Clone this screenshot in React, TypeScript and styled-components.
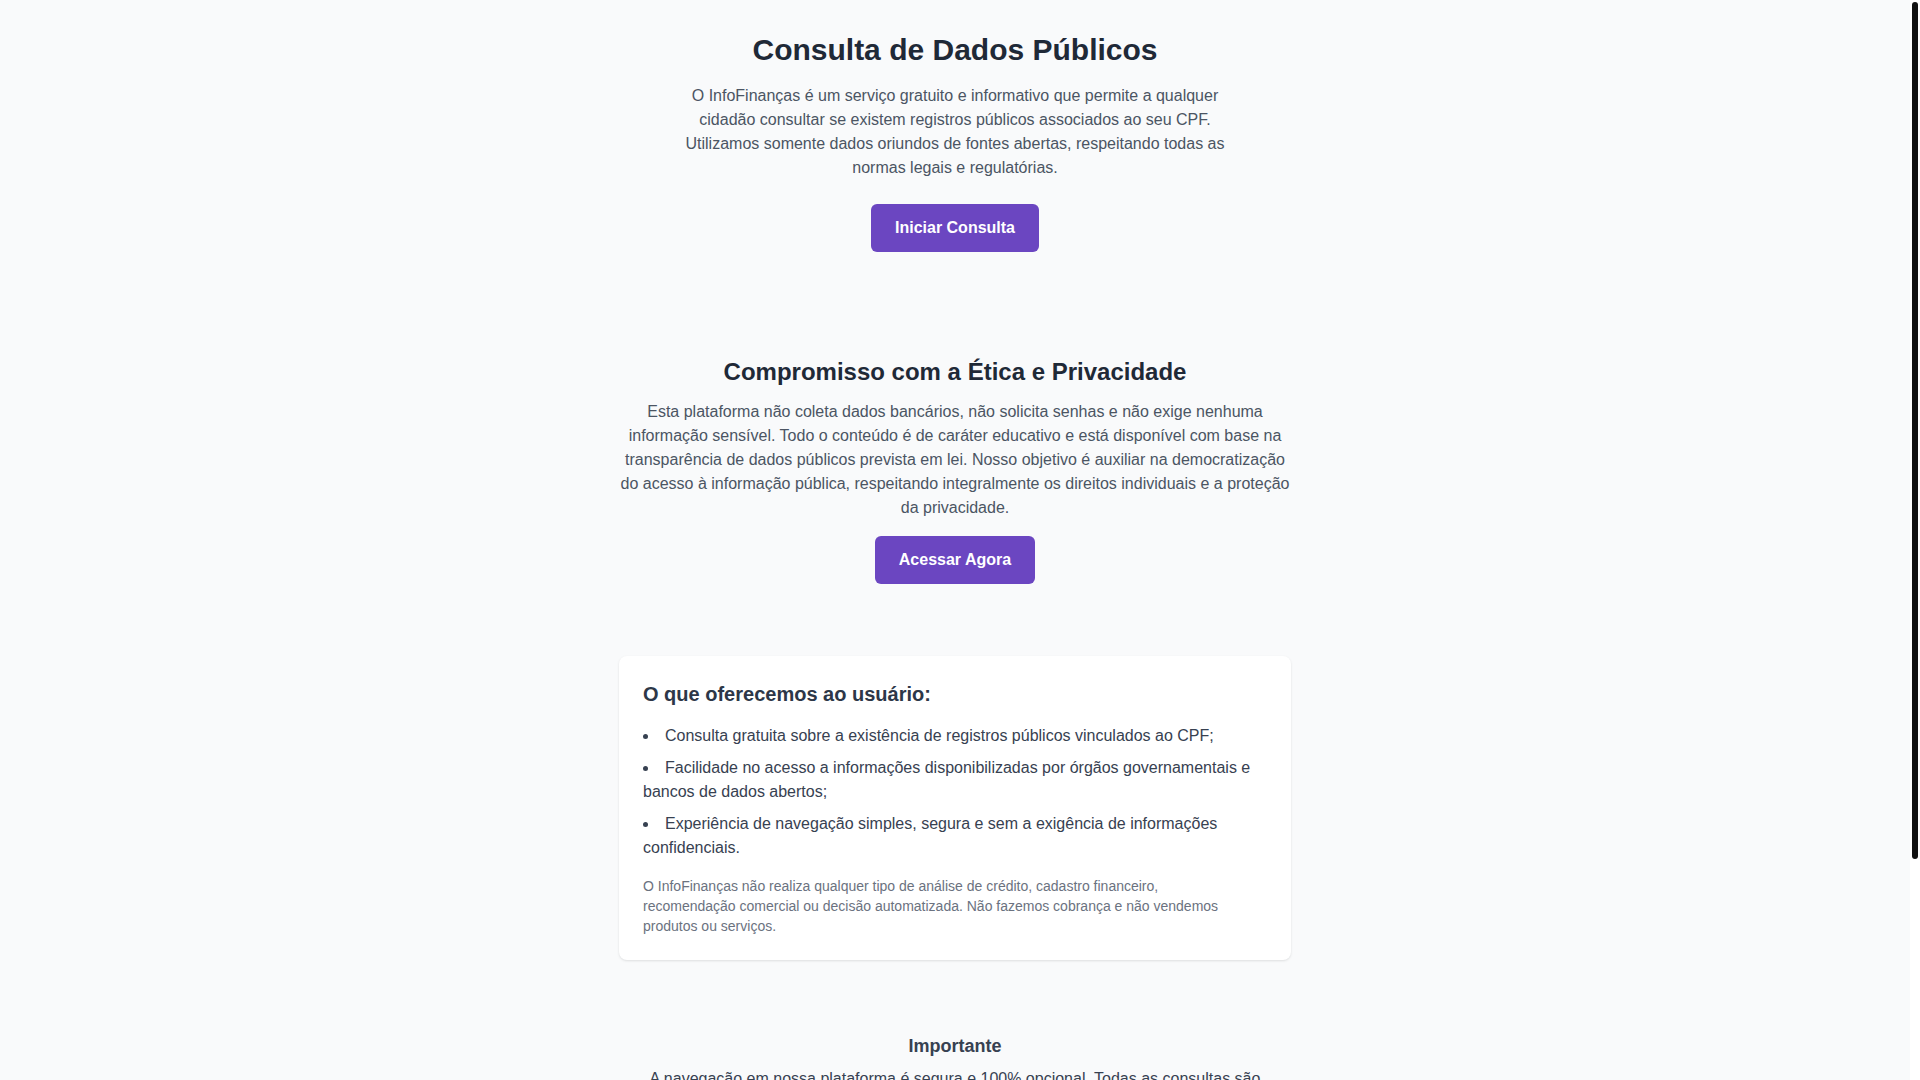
import React from "react";
import styled, { createGlobalStyle } from "styled-components";

const GlobalStyle = createGlobalStyle`
  html, body {
    margin: 0;
    padding: 0;
    height: 100%;
    overflow: hidden;
  }
  body {
    background: #f9fafb;
    font-family: "Liberation Sans", Arial, Helvetica, sans-serif;
    color: #374151;
    -webkit-font-smoothing: antialiased;
  }
  #root { height: 100%; }
  * { box-sizing: border-box; }
`;

const Shell = styled.div`
  display: flex;
  height: 100vh;
  background: #f9fafb;
`;

const Scroller = styled.div`
  flex: 1;
  min-width: 0;
  overflow-y: auto;
  scrollbar-width: none;
  &::-webkit-scrollbar { display: none; }
`;

const Rail = styled.div`
  flex: 0 0 10px;
  background: #ffffff;
  padding: 2px;
`;

const Thumb = styled.div`
  height: 857px;
  background: #111111;
  border-radius: 3px;
`;

const Page = styled.main`
  display: flex;
  flex-direction: column;
  align-items: center;
  padding: 32px 16px 0;
`;

const Section = styled.section<{ $top: number; $width: number }>`
  display: flex;
  flex-direction: column;
  align-items: center;
  text-align: center;
  width: 100%;
  max-width: ${(p) => p.$width}px;
  margin-top: ${(p) => p.$top}px;
`;

const HeroTitle = styled.h1`
  margin: 0 0 16px;
  font-size: 30px;
  line-height: 36px;
  font-weight: 700;
  color: #1f2937;
`;

const SectionTitle = styled.h2`
  margin: 0 0 12px;
  font-size: 24px;
  line-height: 32px;
  font-weight: 700;
  color: #1f2937;
`;

const SmallTitle = styled.h3`
  margin: 0 0 7px;
  font-size: 18px;
  line-height: 28px;
  font-weight: 700;
  color: #374151;
`;

const Lead = styled.p<{ $gap: number; $color?: string }>`
  margin: 0 0 ${(p) => p.$gap}px;
  font-size: 16px;
  line-height: 24px;
  color: ${(p) => p.$color || "#4b5563"};
`;

const CtaButton = styled.button`
  display: inline-flex;
  align-items: center;
  justify-content: center;
  padding: 12px 24px;
  border: none;
  border-radius: 6px;
  background: #6b46c1;
  color: #ffffff;
  font-family: inherit;
  font-size: 16px;
  line-height: 24px;
  font-weight: 700;
  cursor: pointer;
`;

const Card = styled.article`
  width: 100%;
  max-width: 672px;
  margin-top: 72px;
  padding: 24px;
  background: #ffffff;
  border-radius: 8px;
  box-shadow: 0 1px 3px rgba(0, 0, 0, 0.08), 0 1px 2px rgba(0, 0, 0, 0.04);
  text-align: left;
`;

const CardTitle = styled.h3`
  margin: 0 0 16px;
  font-size: 20px;
  line-height: 28px;
  font-weight: 700;
  color: #2d3748;
`;

const FeatureList = styled.ul`
  margin: 0;
  padding: 0;
  list-style: disc inside;
  display: flex;
  flex-direction: column;
  gap: 8px;
`;

const FeatureItem = styled.li`
  font-size: 16px;
  line-height: 24px;
  color: #374151;
`;

const Note = styled.p`
  margin: 16px 0 0;
  max-width: 600px;
  font-size: 14px;
  line-height: 20px;
  color: #6b7280;
`;

const Footer = styled.footer`
  width: 100%;
  max-width: 672px;
  margin-top: 72px;
  padding: 59px 0;
  border-top: 1px solid #e5e7eb;
  display: flex;
  flex-direction: column;
  align-items: center;
  gap: 8px;
  text-align: center;
`;

const FooterText = styled.span`
  font-size: 14px;
  line-height: 20px;
  color: #6b7280;
`;

const features = [
  "Consulta gratuita sobre a existência de registros públicos vinculados ao CPF;",
  "Facilidade no acesso a informações disponibilizadas por órgãos governamentais e bancos de dados abertos;",
  "Experiência de navegação simples, segura e sem a exigência de informações confidenciais.",
];

export default function App() {
  return (
    <>
      <GlobalStyle />
      <Shell>
        <Scroller>
          <Page>
            <Section $top={0} $width={576}>
              <HeroTitle>Consulta de Dados Públicos</HeroTitle>
              <Lead $gap={24}>
                O InfoFinanças é um serviço gratuito e informativo que permite a qualquer cidadão
                consultar se existem registros públicos associados ao seu CPF. Utilizamos somente
                dados oriundos de fontes abertas, respeitando todas as normas legais e regulatórias.
              </Lead>
              <CtaButton type="button">Iniciar Consulta</CtaButton>
            </Section>

            <Section $top={104} $width={672}>
              <SectionTitle>Compromisso com a Ética e Privacidade</SectionTitle>
              <Lead $gap={16}>
                Esta plataforma não coleta dados bancários, não solicita senhas e não exige nenhuma
                informação sensível. Todo o conteúdo é de caráter educativo e está disponível com
                base na transparência de dados públicos prevista em lei. Nosso objetivo é auxiliar
                na democratização do acesso à informação pública, respeitando integralmente os
                direitos individuais e a proteção da privacidade.
              </Lead>
              <CtaButton type="button">Acessar Agora</CtaButton>
            </Section>

            <Card>
              <CardTitle>O que oferecemos ao usuário:</CardTitle>
              <FeatureList>
                {features.map((f) => (
                  <FeatureItem key={f}>{f}</FeatureItem>
                ))}
              </FeatureList>
              <Note>
                O InfoFinanças não realiza qualquer tipo de análise de crédito, cadastro financeiro,
                recomendação comercial ou decisão automatizada. Não fazemos cobrança e não vendemos
                produtos ou serviços.
              </Note>
            </Card>

            <Section $top={72} $width={672}>
              <SmallTitle>Importante</SmallTitle>
              <Lead $gap={0} $color="#374151">
                A navegação em nossa plataforma é segura e 100% opcional. Todas as consultas são
                realizadas a partir de bases públicas e você pode encerrar a navegação a qualquer
                momento.
              </Lead>
            </Section>

            <Footer>
              <FooterText>© 2024 InfoFinanças. Todos os direitos reservados.</FooterText>
              <FooterText>Política de Privacidade · Termos de Uso · Contato</FooterText>
            </Footer>
          </Page>
        </Scroller>
        <Rail aria-hidden="true">
          <Thumb />
        </Rail>
      </Shell>
    </>
  );
}
